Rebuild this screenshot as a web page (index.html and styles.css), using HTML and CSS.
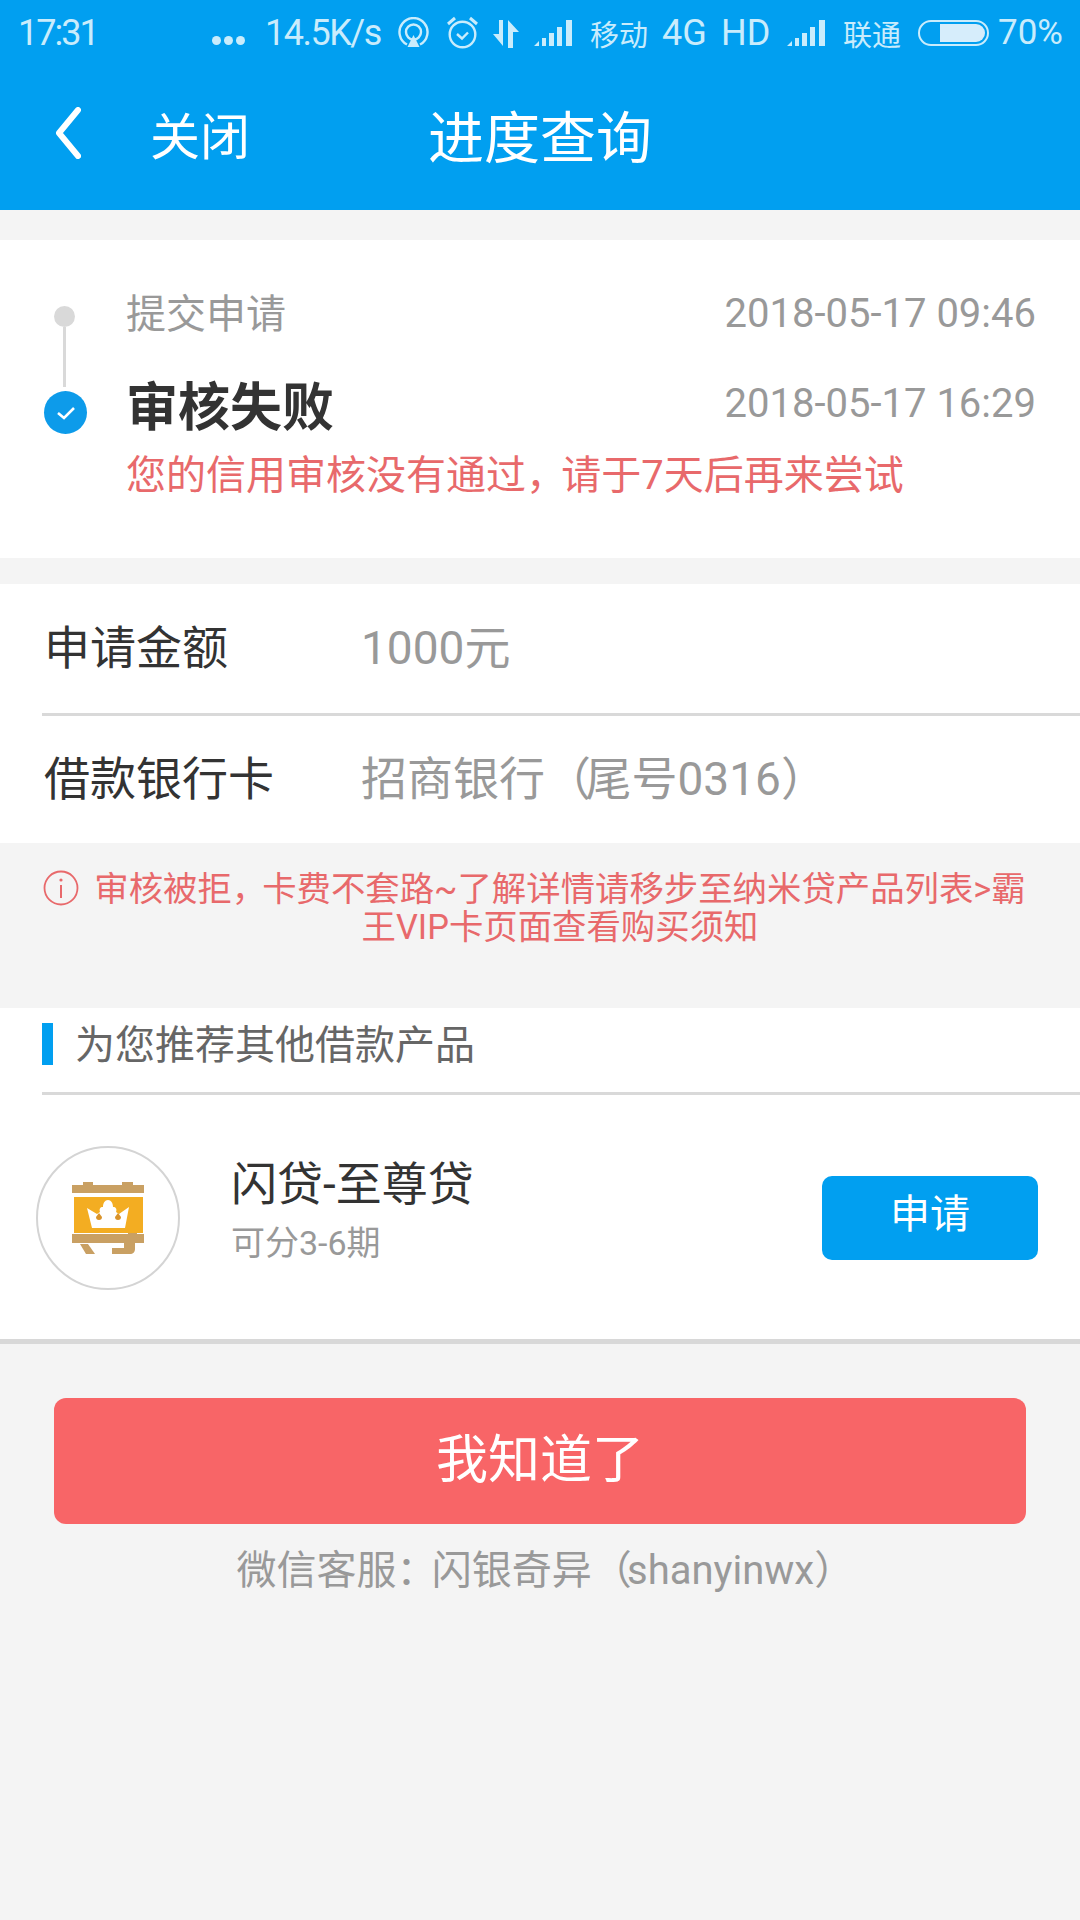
FILE: index.html
```html
<!DOCTYPE html>
<html lang="zh-CN">
<head>
<meta charset="utf-8">
<title>进度查询</title>
<link rel="stylesheet" href="styles.css">
</head>
<body>
<header class="top">
  <div class="status">
    <span class="time">17:31</span>
    <span class="dots"><i></i><i></i><i></i></span>
    <span class="speed">14.5K/s</span>
    <svg class="ic-hot" viewBox="0 0 31 31"><path d="M9 27.500A14 14 0 1 1 22 27.500" fill="none" stroke="currentColor" stroke-width="2.400"/><circle cx="15.500" cy="15" r="7.500" fill="none" stroke="currentColor" stroke-width="2.400"/><path d="M15.500 18l6 12h-12z" fill="currentColor"/></svg>
    <svg class="ic-alarm" viewBox="0 0 33 33"><circle cx="16.500" cy="18.500" r="12.800" fill="none" stroke="currentColor" stroke-width="2.400"/><path d="M11 18l5 4.500 6-6" fill="none" stroke="currentColor" stroke-width="2.400"/><path d="M2 8l7-6M31 8l-7-6" stroke="currentColor" stroke-width="3"/></svg>
    <svg class="ic-arrows" viewBox="0 0 28 30"><path d="M1 16h6V2h4v26zM16 30V2l11 12h-6v16z" fill="currentColor"/></svg>
    <svg class="ic-sig" viewBox="0 0 38 26"><path d="M0 26l5-5v5zM8 18h4v8H8zM15 13h5v13h-5zM23 7h5v19h-5zM32 0h6v26h-6z" fill="currentColor"/></svg>
    <span class="carrier">移动</span>
    <span class="net">4G</span>
    <span class="net hd">HD</span>
    <svg class="ic-sig" viewBox="0 0 38 26"><path d="M0 26l5-5v5zM8 18h4v8H8zM15 13h5v13h-5zM23 7h5v19h-5zM32 0h6v26h-6z" fill="currentColor"/></svg>
    <span class="carrier uni">联通</span>
    <svg class="ic-bat" viewBox="0 0 71 26"><rect x="1" y="1" width="69" height="24" rx="12" fill="none" stroke="currentColor" stroke-width="2"/><path d="M22 4h36a9 9 0 0 1 0 18H22z" fill="#d6edfb"/></svg>
    <span class="pct">70%</span>
  </div>
  <nav class="nav">
    <div class="nav-left">
      <svg class="back" viewBox="0 0 26 52"><path d="M23 3L4 26l19 23" fill="none" stroke="#fff" stroke-width="6" stroke-linecap="round" stroke-linejoin="round"/></svg>
      <span class="close">关闭</span>
    </div>
    <h1 class="title">进度查询</h1>
    <div></div>
  </nav>
</header>

<section class="card progress">
  <div class="rail">
    <span class="dot"></span>
    <span class="line"></span>
    <span class="check">
      <svg viewBox="0 0 20 16"><path d="M2 8l6 5 10-10" fill="none" stroke="#fff" stroke-width="2.600"/></svg>
    </span>
  </div>
  <div class="steps">
    <div class="step first"><span class="step-name">提交申请</span><span class="date">2018-05-17 09:46</span></div>
    <div class="step second"><strong class="step-fail">审核失败</strong><span class="date">2018-05-17 16:29</span></div>
    <p class="reason">您的信用审核没有通过<span class="p">，</span>请于7天后再来尝试</p>
  </div>
</section>

<section class="card details">
  <div class="row"><span class="label">申请金额</span><span class="value">1000元</span></div>
  <div class="row"><span class="label">借款银行卡</span><span class="value">招商银行<span class="p">（</span>尾号0316<span class="p">）</span></span></div>
</section>

<section class="notice">
  <svg class="info" viewBox="0 0 36 36"><circle cx="18" cy="18" r="16.500" fill="none" stroke="#e8696b" stroke-width="1.800"/><path d="M18 15v13" stroke="#e8696b" stroke-width="2"/><circle cx="18" cy="10" r="1.600" fill="#e8696b"/></svg>
  <p class="notice-text">审核被拒<span class="p">，</span>卡费不套路~了解详情请移步至纳米贷产品列表&gt;霸王VIP卡页面查看购买须知</p>
</section>

<section class="card recommend">
  <div class="rec-head"><span class="bar"></span><h2 class="rec-title">为您推荐其他借款产品</h2></div>
  <div class="product">
    <div class="avatar">
      <svg viewBox="0 0 72 72"><path d="M0 3h11V0h10v3h29V0h11v3h11v8H0z" fill="#c9a063"/><rect x="2" y="15" width="69" height="36" fill="#f3ad22"/><path d="M15 26l10 6 3-2c-1-3 0-5 3-5 0-4 2-7 5-7s5 3 5 7c3 0 4 2 3 5l3 2 10-7-4 21H20z" fill="#fff"/><path d="M27 31l3 4a3 3 0 1 1-6 0zM46 31l3 4a3 3 0 1 1-6 0z" fill="#d9932a"/><path d="M0 52h56v-1h9v1h7v9h-9v6c0 3-2 5-5 5H40v-6h12v-5H0z" fill="#c9a063"/><path d="M8 62h8l7 10h-9z" fill="#c9a063"/></svg>
    </div>
    <div class="prod-info">
      <div class="prod-name">闪贷-至尊贷</div>
      <div class="prod-sub">可分3-6期</div>
    </div>
    <button class="apply">申请</button>
  </div>
</section>

<div class="actions">
  <button class="ok">我知道了</button>
  <p class="wechat">微信客服<span class="p">：</span>闪银奇异<span class="p">（</span>shanyinwx<span class="p">）</span></p>
</div>
</body>
</html>
```

FILE: styles.css
```css
* { box-sizing: border-box; margin: 0; padding: 0; }
html, body { height: 100%; }
body {
  width: 1080px;
  min-height: 1920px;
  background: #f4f4f4;
  font-family: Roboto, "Noto Sans CJK SC", sans-serif;
  color: #333;
  overflow: hidden;
}
.p { letter-spacing: -0.12em; }
.top { height: 210px; background: #019ff0; color: #fff; }

.status {
  height: 60px;
  display: flex;
  align-items: center;
  padding: 5px 0 0 18px;
  font-size: 36px;
  color: #c9ecfc;
  white-space: nowrap;
}
.time { width: 194px; letter-spacing: -2px; }
.dots { display: flex; gap: 3px; width: 53px; margin-top: 16px; }
.dots i { width: 9px; height: 9px; border-radius: 50%; background: currentColor; }
.speed { width: 133px; letter-spacing: -1.500px; }
.ic-hot { width: 31px; height: 31px; }
.ic-alarm { width: 33px; height: 33px; margin-left: 17px; }
.ic-arrows { width: 28px; height: 30px; margin-left: 13px; }
.ic-sig { width: 38px; height: 26px; margin-left: 14px; }
.carrier { width: 58px; margin-left: 18px; font-size: 29px; }
.net { width: 59px; margin-left: 14px; }
.net.hd { width: 66px; margin-left: 0; }
.hd + .ic-sig { margin-left: 0; }
.ic-bat { width: 71px; height: 26px; margin-left: 17px; }
.pct { margin-left: 9px; font-size: 35px; }

.nav {
  height: 150px;
  padding-bottom: 4px;
  display: grid;
  grid-template-columns: 1fr auto 1fr;
  align-items: center;
}
.nav-left { display: flex; align-items: center; padding-left: 55px; }
.back { width: 26px; height: 52px; }
.close { margin-left: 69px; font-size: 50px; }
.title { font-size: 56px; font-weight: 400; }

.card { background: #fff; }

.progress {
  margin-top: 30px;
  height: 318px;
  display: flex;
  padding: 43px 44px 0;
}
.rail {
  width: 43px;
  display: flex;
  flex-direction: column;
  align-items: center;
  padding-top: 23px;
}
.dot { width: 21px; height: 21px; margin-right: 2px; border-radius: 50%; background: #d9d9d9; }
.line { width: 3px; height: 60px; margin-right: 2px; background: #d9d9d9; }
.check {
  width: 43px;
  height: 43px;
  margin-top: 4px;
  border-radius: 50%;
  background: #0d9bea;
  display: flex;
  align-items: center;
  justify-content: center;
}
.check svg { width: 20px; height: 16px; }

.steps { flex: 1; margin-left: 39px; }
.step { display: flex; justify-content: space-between; align-items: center; }
.first { height: 56px; }
.first .date { margin-top: 4px; }
.second { height: 72px; margin-top: 28px; }
.step-name { font-size: 40px; color: #999; }
.step-fail { font-size: 52px; font-weight: 700; color: #333; }
.date { font-size: 40px; color: #999; }
.reason { margin-top: 9px; font-size: 40px; line-height: 56px; color: #e8696b; }

.details { margin-top: 26px; }
.row {
  margin-left: 42px;
  padding: 0 0 10px 2px;
  display: flex;
  align-items: center;
  font-size: 46px;
}
.row:first-child { border-bottom: 3px solid #d9d9d9; height: 132px; }
.row:last-child { height: 127px; }
.label { width: 317px; color: #333; }
.value { color: #999; }

.notice {
  height: 165px;
  display: flex;
  align-items: flex-start;
  padding: 27px 0 0 43px;
}
.info { width: 36px; height: 36px; flex: none; }
.notice-text {
  width: 934px;
  margin-left: 14px;
  font-size: 34.400px;
  line-height: 38px;
  color: #e8696b;
  text-align: center;
}

.recommend { height: 336px; border-bottom: 5px solid #d8d8d8; }
.rec-head {
  height: 87px;
  margin-left: 42px;
  display: flex;
  align-items: center;
  border-bottom: 3px solid #d9d9d9;
}
.bar { width: 11px; height: 42px; background: #019ff0; margin-bottom: 12px; }
.rec-title { margin-left: 22px; margin-bottom: 16px; font-size: 40px; font-weight: 400; color: #666; }
.product {
  height: 244px;
  display: flex;
  align-items: center;
  padding: 2px 42px 0 36px;
}
.avatar {
  width: 144px;
  height: 144px;
  border: 2px solid #d4d4d4;
  border-radius: 50%;
  display: flex;
  align-items: center;
  justify-content: center;
}
.avatar svg { width: 72px; height: 72px; }
.prod-info { flex: 1; margin-left: 51px; padding-bottom: 14px; }
.prod-name { font-size: 46px; line-height: 60px; color: #333; }
.prod-sub { margin-top: 4px; font-size: 34px; line-height: 50px; color: #999; }
.apply {
  width: 216px;
  height: 84px;
  border: 0;
  border-radius: 10px;
  background: #019ff0;
  color: #fff;
  font: inherit;
  font-size: 40px;
  padding-bottom: 14px;
}

.actions { padding: 54px 54px 0; text-align: center; }
.ok {
  display: block;
  width: 972px;
  height: 126px;
  border: 0;
  border-radius: 12px;
  background: #f86567;
  color: #fff;
  font: inherit;
  font-size: 52px;
  padding-bottom: 12px;
}
.wechat { margin-top: 22px; padding-left: 6px; font-size: 40px; line-height: 50px; color: #999; }
```
